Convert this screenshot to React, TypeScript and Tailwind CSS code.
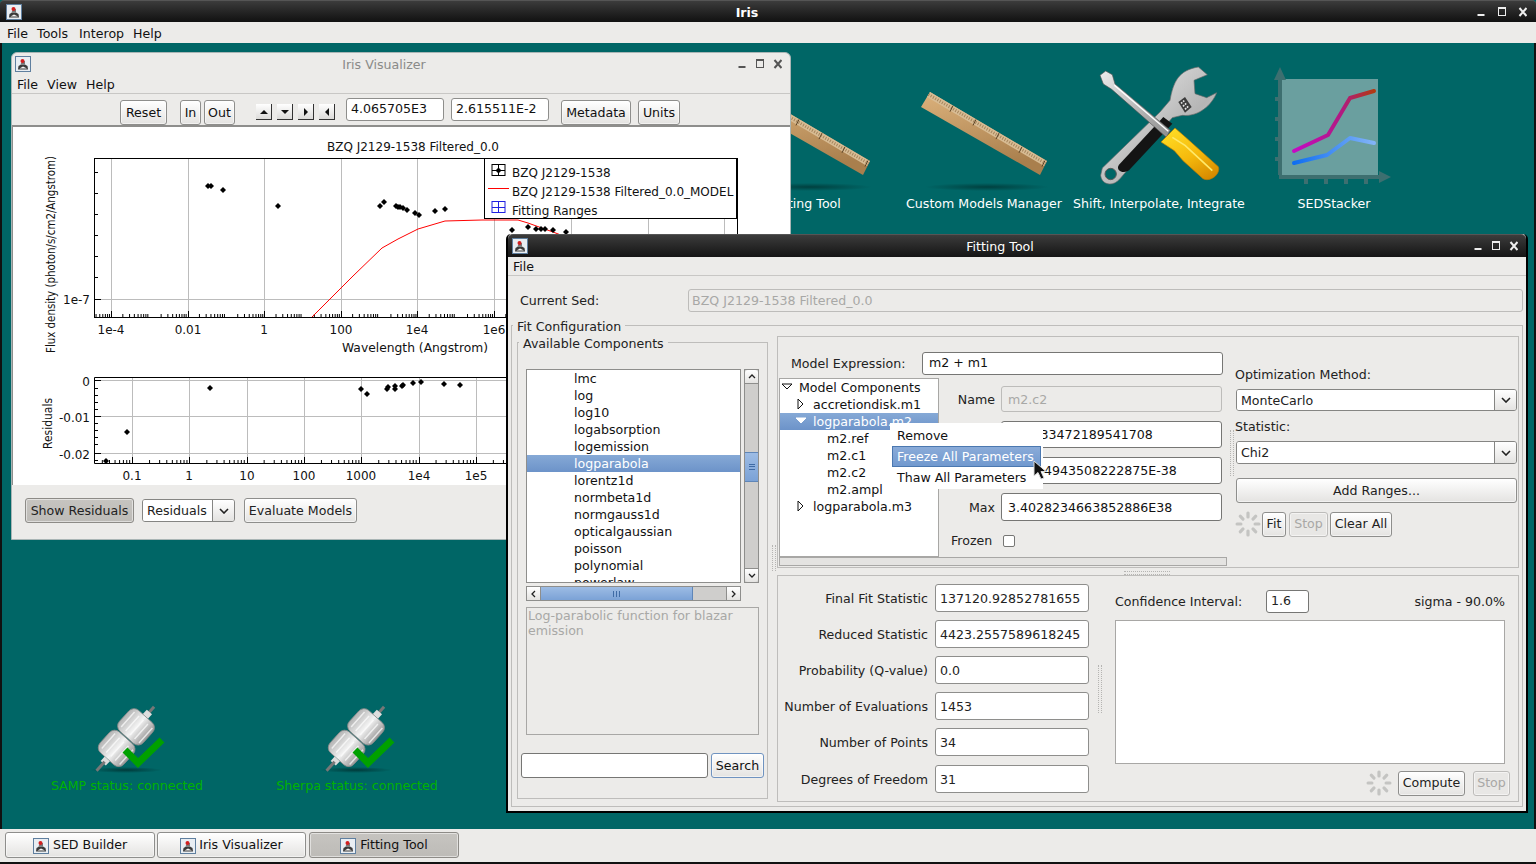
import type { ReactNode } from 'react';

const gridMainX = [111, 188, 264, 341, 417, 494, 571, 648, 724];
const gridResX = [132, 189, 247, 304, 361, 419, 476, 533, 590, 648, 705];
const mainPoints = [
  [208, 186], [211, 186], [223, 190], [278, 206], [380, 206], [384, 202], [396, 206], [398, 207], [400, 207],
  [403, 208], [407, 210], [415, 213], [419, 215], [435, 211], [445, 209], [512, 230], [528, 227], [536, 229],
  [541, 229], [545, 229], [553, 230], [566, 232],
];
const residualPoints = [
  [106, 461], [127, 432], [210, 388], [361, 389], [367, 394], [387, 389], [388, 387], [395, 389], [395, 386],
  [402, 386], [403, 385], [413, 383], [421, 382], [444, 384], [460, 385],
];
const listItems = [
  'lmc', 'log', 'log10', 'logabsorption', 'logemission', 'logparabola', 'lorentz1d', 'normbeta1d', 'normgauss1d',
  'opticalgaussian', 'poisson', 'polynomial', 'powerlaw',
];
const fitStats = [
  ['Final Fit Statistic', '137120.92852781655'],
  ['Reduced Statistic', '4423.2557589618245'],
  ['Probability (Q-value)', '0.0'],
  ['Number of Evaluations', '1453'],
  ['Number of Points', '34'],
  ['Degrees of Freedom', '31'],
];
const logMinors = [0.301, 0.477, 0.602, 0.699, 0.778, 0.845, 0.903, 0.954];

function JavaIcon({ className = '' }: { className?: string }) {
  return (
    <svg width="16" height="16" viewBox="0 0 16 16" className={`shrink-0 ${className}`}>
      <rect x="0.5" y="0.5" width="15" height="15" fill="#e9eef3" stroke="#5f7f9f" />
      <path d="M3 13.5 L3.5 10 L6 8.5 L10 8.5 L12.5 10 L13 13.5 Z" fill="#3a3a3a" />
      <path d="M4.5 12.5 L8 10.5 L12 12.5 Z" fill="#f4f4f4" />
      <path d="M5.5 8.5 L7 5 L10 5 L10 8.5 Z" fill="#777" />
      <circle cx="7.5" cy="5" r="2" fill="#d21f1f" />
    </svg>
  );
}

function WinButtons({ color, gap }: { color: string; gap: number }) {
  return (
    <svg width={2 * gap + 8} height="12" viewBox={`0 0 ${2 * gap + 8} 12`} className="shrink-0">
      <rect x="0.5" y="8" width="7" height="2" fill={color} />
      <rect x={gap + 0.5} y="1.5" width="7" height="8" fill="none" stroke={color} />
      <rect x={gap} y="1" width="8" height="2" fill={color} />
      <path d={`M${2 * gap + 0.5} 2 L${2 * gap + 7.5} 10 M${2 * gap + 7.5} 2 L${2 * gap + 0.5} 10`} stroke={color} strokeWidth="2" />
    </svg>
  );
}

function Btn({ children, className = '', disabled, pressed }: { children: ReactNode; className?: string; disabled?: boolean; pressed?: boolean }) {
  return (
    <div
      className={`flex items-center justify-center rounded-[3px] border pt-[1px] shadow-[inset_0_0_0_1px_rgba(255,255,255,0.5)] ${
        pressed
          ? 'border-[#8d8b87] bg-linear-to-b from-[#c6c4c0] to-[#bdbbb7]'
          : disabled
            ? 'border-[#bdbcba] bg-[#e8e7e5] text-[#a8a8a6]'
            : 'border-[#8e8e8c] bg-linear-to-b from-white to-[#e4e3e1]'
      } ${className}`}
    >
      {children}
    </div>
  );
}

function Field({ value, className = '', disabled }: { value?: string; className?: string; disabled?: boolean }) {
  return (
    <div
      className={`flex items-center overflow-hidden whitespace-nowrap rounded-[3px] border px-[6px] ${
        disabled ? 'border-[#bdbcba] bg-[#ecebe9] text-[#a8a8a6]' : 'border-[#767674] bg-white'
      } ${className}`}
    >
      {value}
    </div>
  );
}

function Combo({ value, className = '' }: { value: string; className?: string }) {
  return (
    <div className={`flex overflow-hidden rounded-[3px] border border-[#858583] ${className}`}>
      <div className="flex flex-1 items-center bg-white px-[4px] pt-[2px]">{value}</div>
      <div className="flex w-[22px] items-center justify-center border-l border-[#858583] bg-linear-to-b from-white to-[#e4e3e1]">
        <svg width="10" height="6" viewBox="0 0 10 6">
          <path d="M1 1 L5 5 L9 1" fill="none" stroke="#222" strokeWidth="1.6" />
        </svg>
      </div>
    </div>
  );
}

function Spinner() {
  const spokes = [0, 45, 90, 135, 180, 225, 270, 315];
  return (
    <svg width="26" height="26" viewBox="-13 -13 26 26" className="shrink-0">
      {spokes.map((a) => (
        <rect key={a} x="-1.6" y="-12.5" width="3.2" height="7" rx="1.5" fill="#c4c4c2" transform={`rotate(${a})`} />
      ))}
    </svg>
  );
}

function ArrowBtn({ d }: { d: string }) {
  return (
    <div className="flex h-[16px] w-[16px] items-center justify-center border-r border-b border-[#333] bg-linear-to-b from-white to-[#dcdbd9]">
      <svg width="8" height="8" viewBox="0 0 8 8">
        <path d={d} fill="#111" />
      </svg>
    </div>
  );
}

function Ruler({ dx }: { dx: number }) {
  return (
    <svg width="140" height="110" viewBox="915 85 140 110" className="absolute top-[85px]" style={{ left: 915 + dx }}>
      <defs>
        <linearGradient id={`wood${dx}`} x1="0" y1="0" x2="0.3" y2="1">
          <stop offset="0" stopColor="#dcb27c" />
          <stop offset="1" stopColor="#a97f4d" />
        </linearGradient>
        <radialGradient id={`shade${dx}`}>
          <stop offset="0" stopColor="#00403f" />
          <stop offset="1" stopColor="#006666" />
        </radialGradient>
      </defs>
      <ellipse cx="987" cy="187" rx="62" ry="4" fill={`url(#shade${dx})`} />
      <polygon points="930,92 921,107 1040,175 1047,161" fill={`url(#wood${dx})`} />
      <polygon points="930,92 927,97 1044,166 1047,161" fill="#d8bc94" />
      <path d="M928.5 94.5 L1045.5 163.5" stroke="#a5855c" strokeWidth="3" strokeDasharray="1 1.6" />
      {[1, 2, 3, 4, 5].map((i) => (
        <path key={i} d={`M${930 + i * 23} ${92 + i * 13.7} l-3 6`} stroke="#5b4326" strokeWidth="1" />
      ))}
    </svg>
  );
}

function Tools() {
  return (
    <svg width="130" height="130" viewBox="0 0 390 390" className="absolute left-[1095px] top-[62px]">
      <defs>
        <linearGradient id="steel" x1="0" y1="0" x2="1" y2="1">
          <stop offset="0" stopColor="#f6f6f6" />
          <stop offset="0.6" stopColor="#b5b5b5" />
          <stop offset="1" stopColor="#e4e4e4" />
        </linearGradient>
        <linearGradient id="head" x1="0" y1="0" x2="1" y2="1">
          <stop offset="0" stopColor="#ededed" />
          <stop offset="1" stopColor="#8c8c8c" />
        </linearGradient>
        <linearGradient id="yellow" x1="0.2" y1="0" x2="0.8" y2="1">
          <stop offset="0" stopColor="#ffdc24" />
          <stop offset="0.55" stopColor="#f5b90c" />
          <stop offset="1" stopColor="#d68a00" />
        </linearGradient>
      </defs>
      <path d="M22 318 L195 150 L225 115 C235 60 250 25 310 15 L337 38 L297 55 L300 95 L335 107 L365 92 C350 130 310 165 262 160 L232 167 L75 350 C55 375 20 370 17 340 Z" fill="url(#steel)" stroke="#6a6a6a" strokeWidth="2" />
      <path d="M72 308 L205 165 L232 185 L102 325 C85 337 60 325 72 308 Z" fill="#141414" />
      <circle cx="47" cy="336" r="17" fill="#006666" stroke="#5a5a5a" strokeWidth="3" />
      <path d="M250 120 L270 105 L290 135 L270 152 Z" fill="#3c3c3c" />
      <path d="M258 124 L270 114 M264 133 L276 122 M270 142 L282 131" stroke="#e8e8e8" strokeWidth="5" strokeDasharray="5 3" />
      <path d="M15 40 L32 27 L52 38 L60 66 L226 205 L214 226 L50 82 L25 66 Z" fill="url(#head)" stroke="#555" strokeWidth="2" />
      <path d="M58 70 L220 208" stroke="#fff" strokeWidth="4" />
      <path d="M198 240 L240 198 L272 226 L370 314 C378 335 346 362 324 350 L264 296 L238 266 Z" fill="url(#yellow)" stroke="#b97a00" strokeWidth="2" />
      <path d="M232 226 L270 250 L352 326" fill="none" stroke="#ffe96a" strokeWidth="5" />
    </svg>
  );
}

function Stacker() {
  return (
    <svg width="122" height="124" viewBox="1272 66 122 124" className="absolute left-[1272px] top-[66px]">
      <defs>
        <linearGradient id="upper" x1="0" y1="0" x2="1" y2="0" gradientUnits="objectBoundingBox">
          <stop offset="0" stopColor="#c40bc4" />
          <stop offset="0.6" stopColor="#b01a80" />
          <stop offset="1" stopColor="#b23a12" />
        </linearGradient>
        <linearGradient id="lower" x1="0" y1="0" x2="1" y2="0">
          <stop offset="0" stopColor="#0f6ef0" />
          <stop offset="1" stopColor="#82b4f8" />
        </linearGradient>
      </defs>
      <rect x="1280" y="79" width="98" height="96" fill="#6a9f9f" />
      <path d="M1280 175 V74 M1279 177 H1384" stroke="#3d6f70" strokeWidth="4" fill="none" />
      <polygon points="1280,67 1274,80 1286,80" fill="#3d6f70" />
      <polygon points="1391,177 1379,171 1379,183" fill="#3d6f70" />
      {[97, 117, 137, 157].map((y) => (
        <rect key={y} x="1275" y={y} width="7" height="4" fill="#3d6f70" />
      ))}
      {[1304, 1324, 1344, 1364].map((x) => (
        <rect key={x} x={x} y="177" width="4" height="7" fill="#3d6f70" />
      ))}
      <polyline points="1294,151 1328,135 1350,98 1374,91" fill="none" stroke="url(#upper)" strokeWidth="4" strokeLinecap="round" strokeLinejoin="round" />
      <polyline points="1294,163 1327,155 1350,138 1374,143" fill="none" stroke="url(#lower)" strokeWidth="4" strokeLinecap="round" strokeLinejoin="round" />
    </svg>
  );
}

function PlugStatus({ left, label }: { left: number; label: string }) {
  const id = `plug${left}`;
  const ridges = [24, 30, 36, 42, 48];
  return (
    <div className="absolute top-[700px] flex w-[200px] flex-col items-center text-[#00b300]" style={{ left }}>
      <svg width="72" height="76" viewBox="0 0 72 76" className="overflow-visible">
        <defs>
          <linearGradient id={id} x1="0" y1="0" x2="1" y2="0">
            <stop offset="0" stopColor="#b4b4b4" />
            <stop offset="0.5" stopColor="#f2f2f2" />
            <stop offset="1" stopColor="#989898" />
          </linearGradient>
          <radialGradient id={`${id}s`}>
            <stop offset="0" stopColor="#003a3a" />
            <stop offset="1" stopColor="#006666" />
          </radialGradient>
        </defs>
        <ellipse cx="35" cy="70" rx="36" ry="3" fill={`url(#${id}s)`} />
        <g transform="rotate(42 35 38)">
          <rect x="33.5" y="-4" width="3" height="14" fill="#777" />
          <rect x="31.5" y="3" width="7" height="7" fill="#ddd" />
          <rect x="19" y="9" width="32" height="28" rx="7" fill={`url(#${id})`} stroke="#8a8a8a" strokeWidth="0.8" />
          <rect x="19" y="38" width="32" height="28" rx="7" fill={`url(#${id})`} stroke="#8a8a8a" strokeWidth="0.8" />
          {ridges.map((x) => (
            <path key={x} d={`M${x} 13 V33 M${x} 42 V62`} stroke="#ffffff" strokeWidth="1.5" opacity="0.7" />
          ))}
          <rect x="31.5" y="66" width="7" height="6" fill="#ddd" />
          <rect x="33.5" y="70" width="3" height="12" fill="#777" />
        </g>
        <polyline points="34,50 47,63 71,40" fill="none" stroke="#00a000" strokeWidth="7" />
      </svg>
      <span className="mt-[2px] leading-[16px]">{label}</span>
    </div>
  );
}

function PlotArea() {
  const minorX: number[] = [];
  for (let i = 0; i < 17; i++) logMinors.forEach((m) => minorX.push(73 + i * 38.3 + m * 38.3));
  const resMinorX: number[] = [];
  for (let i = 0; i < 12; i++) logMinors.forEach((m) => resMinorX.push(75 + i * 57.3 + m * 57.3));
  const point = (x: number, y: number) => `${x},${y - 3} ${x + 3},${y} ${x},${y + 3} ${x - 3},${y}`;

  return (
    <svg width="777" height="358" viewBox="13 127 777 358" className="block" fontFamily="DejaVu Sans" fontSize="12" fill="#111">
      <text x="413" y="151" textAnchor="middle">BZQ J2129-1538 Filtered_0.0</text>
      {gridMainX.map((x) => <path key={x} d={`M${x + 0.5} 159 V317`} stroke="#bcbcbc" />)}
      <path d="M95 299.5 H737" stroke="#bcbcbc" />
      <rect x="94.5" y="158.5" width="643" height="159" fill="none" stroke="#000" />
      {minorX.filter((x) => x > 95 && x < 737).map((x) => <path key={x} d={`M${x} 317 v-3`} stroke="#000" />)}
      {gridMainX.map((x) => <path key={x} d={`M${x + 0.5} 317 v-6`} stroke="#000" />)}
      {[172, 193, 214, 235, 256, 277].map((y) => <path key={y} d={`M95 ${y + 0.5} h3`} stroke="#000" />)}
      <path d="M95 299.5 h6" stroke="#000" />
      <polyline points="312,317 337,292 353,276 382,248 398,239 418,229 445,221 482,220 518,220 528,223 553,232 600,250" fill="none" stroke="#f00" />
      {mainPoints.map(([x, y]) => <polygon key={`${x}-${y}`} points={point(x, y)} fill="#000" />)}
      {[['1e-4', 111], ['0.01', 188], ['1', 264], ['100', 341], ['1e4', 417], ['1e6', 494]].map(([t, x]) => (
        <text key={t} x={x} y="334" textAnchor="middle">{t}</text>
      ))}
      <text x="90" y="304" textAnchor="end">1e-7</text>
      <text x="342" y="352" textLength="146" lengthAdjust="spacingAndGlyphs">Wavelength (Angstrom)</text>
      <text transform="translate(55 353) rotate(-90)" textLength="197" lengthAdjust="spacingAndGlyphs">Flux density (photon/s/cm2/Angstrom)</text>

      <rect x="484.5" y="158.5" width="252" height="60" fill="#fff" stroke="#000" />
      <path d="M498.5 164 V176 M492 164.5 H505 M492 175.5 H505 M492 170.5 H505 M492 164 V176 M505 164 V176" stroke="#000" fill="none" />
      <polygon points={point(498.5, 170.5)} fill="#000" />
      <path d="M488 188.5 H509" stroke="#f00" />
      <path d="M498.5 201 V213 M492 201.5 H505 M492 212.5 H505 M492 207.5 H505 M492 201 V213 M505 201 V213" stroke="#2020e0" fill="none" />
      <text x="512" y="177">BZQ J2129-1538</text>
      <text x="512" y="196">BZQ J2129-1538 Filtered_0.0_MODEL</text>
      <text x="512" y="215">Fitting Ranges</text>

      {gridResX.map((x) => <path key={x} d={`M${x + 0.5} 378 V463`} stroke="#bcbcbc" />)}
      {[380, 416, 453].map((y) => <path key={y} d={`M95 ${y + 0.5} H737`} stroke="#bcbcbc" />)}
      <path d="M737.5 377.5 H94.5 V463.5 H737.5" fill="none" stroke="#000" />
      {resMinorX.filter((x) => x > 95 && x < 737).map((x) => <path key={x} d={`M${x} 463 v-3`} stroke="#000" />)}
      {gridResX.map((x) => <path key={x} d={`M${x + 0.5} 463 v-6`} stroke="#000" />)}
      {[388, 395, 402, 409, 423, 430, 437, 444, 460].map((y) => <path key={y} d={`M95 ${y + 0.5} h3`} stroke="#000" />)}
      {[380, 416, 453].map((y) => <path key={y} d={`M95 ${y + 0.5} h6`} stroke="#000" />)}
      {residualPoints.map(([x, y]) => <polygon key={`${x}-${y}`} points={point(x, y)} fill="#000" />)}
      {[['0.1', 132], ['1', 189], ['10', 247], ['100', 304], ['1000', 361], ['1e4', 419], ['1e5', 476]].map(([t, x]) => (
        <text key={t} x={x} y="480" textAnchor="middle">{t}</text>
      ))}
      <text x="90" y="386" textAnchor="end">0</text>
      <text x="90" y="422" textAnchor="end">-0.01</text>
      <text x="90" y="459" textAnchor="end">-0.02</text>
      <text transform="translate(52 449) rotate(-90)" textLength="51" lengthAdjust="spacingAndGlyphs">Residuals</text>
    </svg>
  );
}

function VisualizerWindow() {
  return (
    <div className="absolute left-[11px] top-[52px] flex h-[488px] w-[780px] flex-col overflow-hidden rounded-t-[6px] border border-[#a9b5b5] bg-[#ecebe9]">
      <div className="relative flex h-[22px] shrink-0 items-center justify-between pl-[3px] pr-[8px]">
        <JavaIcon />
        <span className="absolute left-0 top-[3px] w-full pr-[34px] text-center text-[#8a8a88]">Iris Visualizer</span>
        <WinButtons color="#555" gap={18} />
      </div>
      <div className="flex h-[19px] shrink-0 items-center gap-[9px] border-b border-[#c8c7c5] pl-[5px] pt-[2px]">
        <span>File</span>
        <span>View</span>
        <span>Help</span>
      </div>
      <div className="flex h-[33px] shrink-0 items-start border-b-2 border-[#8e8e8c] pl-[108px] pt-[6px]">
        <Btn className="h-[25px] w-[47px]">Reset</Btn>
        <Btn className="ml-[13px] h-[25px] w-[21px]">In</Btn>
        <Btn className="ml-[3px] h-[25px] w-[31px]">Out</Btn>
        <div className="ml-[21px] mt-[4px] flex gap-[5px]">
          <ArrowBtn d="M0 6 L4 2 L8 6 Z" />
          <ArrowBtn d="M0 2 L8 2 L4 6 Z" />
          <ArrowBtn d="M2 0 L6 4 L2 8 Z" />
          <ArrowBtn d="M6 0 L2 4 L6 8 Z" />
        </div>
        <Field value="4.065705E3" className="-mt-[2px] ml-[11px] h-[23px] w-[98px] !px-[4px] !border-[#8e8e8c]" />
        <Field value="2.615511E-2" className="-mt-[2px] ml-[7px] h-[23px] w-[98px] !px-[4px] !border-[#8e8e8c]" />
        <Btn className="ml-[12px] h-[25px] w-[70px]">Metadata</Btn>
        <Btn className="ml-[7px] h-[25px] w-[42px]">Units</Btn>
      </div>
      <div className="h-[358px] shrink-0 border-l border-[#8e8e8c] bg-white">
        <PlotArea />
      </div>
      <div className="flex flex-1 items-start gap-[8px] pl-[13px] pt-[13px] text-[#222]">
        <Btn pressed className="h-[25px] w-[109px]">Show Residuals</Btn>
        <Combo value="Residuals" className="mt-[1px] h-[23px] w-[93px]" />
        <Btn className="ml-[1px] h-[25px] w-[113px]">Evaluate Models</Btn>
      </div>
    </div>
  );
}

function GroupBox({ title, className = '', children }: { title: string; className?: string; children: ReactNode }) {
  return (
    <div className={`relative border border-[#bebdbb] ${className}`}>
      <span className="absolute -top-[6px] left-[1px] bg-[#ecebe9] px-[4px] leading-[14px] text-[#222]">{title}</span>
      {children}
    </div>
  );
}

function ComponentList() {
  return (
    <GroupBox title="Available Components" className="mt-[6px] h-[457px] w-[251px] shrink-0">
      <div className="ml-[8px] mt-[26px] flex gap-[3px]">
        <div className="h-[214px] w-[215px] overflow-hidden border border-[#8e8e8c] bg-white">
          {listItems.map((item) => (
            <div
              key={item}
              className={`h-[17px] pl-[47px] leading-[17px] ${item === 'logparabola' ? 'bg-linear-to-b from-[#86a9d6] to-[#6c93c9] text-white' : ''}`}
            >
              {item}
            </div>
          ))}
        </div>
        <div className="flex h-[214px] w-[15px] flex-col border border-[#8e8e8c] bg-[#cfcecc]">
          <div className="flex h-[14px] items-center justify-center rounded-t-[3px] border-b border-[#8e8e8c] bg-linear-to-b from-white to-[#e4e3e1]">
            <svg width="8" height="5" viewBox="0 0 8 5"><path d="M1 4 L4 1 L7 4" fill="none" stroke="#222" strokeWidth="1.3" /></svg>
          </div>
          <div className="mt-[68px] flex h-[30px] items-center justify-center border-y border-[#5f86b8] bg-linear-to-b from-[#9dbce4] to-[#7ba2d6]">
            <div className="h-[6px] w-[6px] border-y border-[#3f6ba5] after:block after:h-[1px] after:translate-y-[1px] after:bg-[#3f6ba5]" />
          </div>
          <div className="mt-auto flex h-[14px] items-center justify-center rounded-b-[3px] border-t border-[#8e8e8c] bg-linear-to-b from-white to-[#e4e3e1]">
            <svg width="8" height="5" viewBox="0 0 8 5"><path d="M1 1 L4 4 L7 1" fill="none" stroke="#222" strokeWidth="1.3" /></svg>
          </div>
        </div>
      </div>
      <div className="ml-[8px] mt-[3px] flex h-[15px] w-[215px] border border-[#8e8e8c] bg-[#cfcecc]">
        <div className="flex w-[14px] items-center justify-center border-r border-[#8e8e8c] bg-linear-to-b from-white to-[#e4e3e1]">
          <svg width="5" height="8" viewBox="0 0 5 8"><path d="M4 1 L1 4 L4 7" fill="none" stroke="#222" strokeWidth="1.3" /></svg>
        </div>
        <div className="flex w-[152px] items-center justify-center gap-[1px] border-r border-[#5f86b8] bg-linear-to-b from-[#9dbce4] to-[#7ba2d6]">
          <i className="h-[6px] w-[1px] bg-[#3f6ba5]" />
          <i className="ml-[1px] h-[6px] w-[1px] bg-[#3f6ba5]" />
          <i className="ml-[1px] h-[6px] w-[1px] bg-[#3f6ba5]" />
        </div>
        <div className="ml-auto flex w-[14px] items-center justify-center border-l border-[#8e8e8c] bg-linear-to-b from-white to-[#e4e3e1]">
          <svg width="5" height="8" viewBox="0 0 5 8"><path d="M1 1 L4 4 L1 7" fill="none" stroke="#222" strokeWidth="1.3" /></svg>
        </div>
      </div>
      <div className="ml-[8px] mt-[6px] h-[128px] w-[233px] border border-[#a8a7a5] px-[1px] leading-[15px] text-[#a8a8a6]">
        Log-parabolic function for blazar emission
      </div>
      <div className="ml-[3px] mt-[18px] flex h-[25px] gap-[3px]">
        <Field className="h-[25px] w-[187px]" />
        <Btn className="h-[25px] w-[53px] !border-[#6f93c0]">Search</Btn>
      </div>
    </GroupBox>
  );
}

function TreeRow({ indent, label, arrow, selected }: { indent: number; label: string; arrow?: 'open' | 'closed'; selected?: boolean }) {
  return (
    <div className={`relative h-[17px] leading-[17px] ${selected ? 'bg-linear-to-b from-[#86a9d6] to-[#6c93c9] text-white' : ''}`} style={{ paddingLeft: indent }}>
      {arrow && (
        <svg width="12" height="12" viewBox="0 0 12 12" className="absolute top-[2px]" style={{ left: indent - 18 }}>
          {arrow === 'open' ? (
            <path d="M1 3 H11 L6 8 Z" fill={selected ? '#fff' : 'none'} stroke={selected ? '#fff' : '#111'} />
          ) : (
            <path d="M3 1 V11 L8 6 Z" fill="none" stroke="#111" />
          )}
        </svg>
      )}
      {label}
    </div>
  );
}

function ModelPanel() {
  return (
    <div className="flex h-[232px] border border-[#bebdbb]">
      <div className="ml-[1px] flex w-[448px] shrink-0 flex-col">
        <div className="mt-[15px] flex h-[23px] items-center">
          <span className="ml-[12px] w-[131px] pt-[1px] text-[#222]">Model Expression:</span>
          <Field value="m2 + m1" className="h-[23px] w-[301px]" />
        </div>
        <div className="mt-[3px] flex h-[179px]">
          <div className="w-[160px] shrink-0 overflow-hidden border border-[#a8a7a5] bg-white">
            <TreeRow indent={19} label="Model Components" arrow="open" />
            <TreeRow indent={33} label="accretiondisk.m1" arrow="closed" />
            <TreeRow indent={33} label="logparabola.m2" arrow="open" selected />
            <TreeRow indent={47} label="m2.ref" />
            <TreeRow indent={47} label="m2.c1" />
            <TreeRow indent={47} label="m2.c2" />
            <TreeRow indent={47} label="m2.ampl" />
            <TreeRow indent={33} label="logparabola.m3" arrow="closed" />
          </div>
          <div className="flex flex-1 flex-col gap-[9px] pt-[8px]">
            {[
              ['Name', 'm2.c2', 'h-[26px]', true],
              ['Val', '-1.2833472189541708', 'h-[27px]', false],
              ['Min', '1.1754943508222875E-38', 'h-[27px]', false],
              ['Max', '3.4028234663852886E38', 'h-[28px]', false],
            ].map(([label, value, height, disabled]) => (
              <div key={label as string} className="flex items-center">
                <span className="w-[62px] pr-[6px] pt-[2px] text-right text-[#222]">{label}</span>
                <Field value={value as string} disabled={disabled as boolean} className={`w-[221px] pt-[2px] ${height as string}`} />
              </div>
            ))}
            <div className="mt-[1px] flex items-center pl-[12px] text-[#222]">
              <span className="w-[52px] pt-[1px]">Frozen</span>
              <div className="h-[12px] w-[12px] rounded-[2px] border border-[#767674] bg-white" />
            </div>
          </div>
        </div>
        <div className="h-[9px] border border-[#a8a7a5] bg-[#e4e3e1]" />
      </div>
      <div className="ml-[8px] flex w-[282px] shrink-0 flex-col text-[#222]">
        <span className="mt-[30px] h-[16px] leading-[16px]">Optimization Method:</span>
        <Combo value="MonteCarlo" className="ml-[1px] mt-[6px] h-[22px] w-[281px]" />
        <span className="mt-[8px] h-[16px] leading-[16px]">Statistic:</span>
        <Combo value="Chi2" className="ml-[1px] mt-[6px] h-[23px] w-[281px]" />
        <Btn className="ml-[1px] mt-[14px] h-[25px] w-[281px]">Add Ranges...</Btn>
        <div className="mt-[8px] flex items-center">
          <Spinner />
          <Btn className="ml-[1px] h-[25px] w-[24px]">Fit</Btn>
          <Btn disabled className="ml-[3px] h-[25px] w-[39px]">Stop</Btn>
          <Btn className="ml-[2px] h-[25px] w-[62px]">Clear All</Btn>
        </div>
      </div>
    </div>
  );
}

function ResultsPanel() {
  return (
    <div className="mt-[7px] flex h-[227px] border border-[#bebdbb]">
      <div className="flex w-[311px] shrink-0 flex-col gap-[8px] pt-[8px] text-[#222]">
        {fitStats.map(([label, value]) => (
          <div key={label} className="flex h-[28px] items-center justify-end last:mt-[1px]">
            <span className="mr-[7px] pt-[2px]">{label}</span>
            <Field value={value} className="h-[28px] w-[154px] !px-[4px] pt-[2px] !border-[#8e8e8c]" />
          </div>
        ))}
      </div>
      <div className="ml-[26px] flex w-[390px] shrink-0 flex-col text-[#222]">
        <div className="mt-[14px] flex h-[23px] items-center">
          <span className="w-[151px] pt-[2px]">Confidence Interval:</span>
          <Field value="1.6" className="h-[23px] w-[43px] !px-[4px]" />
          <span className="ml-auto pt-[2px]">sigma - 90.0%</span>
        </div>
        <div className="mt-[7px] h-[144px] border border-[#a8a7a5] bg-white" />
        <div className="mr-[-5px] mt-[6px] flex items-center justify-end">
          <Spinner />
          <Btn className="ml-[6px] h-[25px] w-[67px]">Compute</Btn>
          <Btn disabled className="ml-[8px] h-[25px] w-[37px]">Stop</Btn>
        </div>
      </div>
    </div>
  );
}

function FittingWindow() {
  return (
    <div className="absolute left-[506px] top-[234px] flex h-[579px] w-[1022px] flex-col rounded-t-[5px] border-2 border-t-0 border-black bg-[#ecebe9]">
      <div className="relative flex h-[23px] shrink-0 items-center justify-between rounded-t-[5px] border-t border-[#555] bg-linear-to-b from-[#3c3c3c] to-[#151515] pl-[4px] pr-[8px] text-white">
        <JavaIcon />
        <span className="absolute left-0 top-[3px] w-full pr-[34px] text-center">Fitting Tool</span>
        <WinButtons color="#eee" gap={18} />
      </div>
      <div className="flex h-[19px] shrink-0 items-center border-b border-[#c8c7c5] pl-[5px] pt-[2px]">File</div>
      <div className="mt-[13px] flex h-[23px] shrink-0 items-center pl-[12px]">
        <span className="w-[168px] pt-[2px] text-[#222]">Current Sed:</span>
        <Field value="BZQ J2129-1538 Filtered_0.0" disabled className="h-[23px] w-[835px] !px-[3px] pt-[2px]" />
      </div>
      <GroupBox title="Fit Configuration" className="ml-[3px] mt-[13px] h-[482px] w-[1012px]">
        <div className="flex items-start pl-[5px] pt-[10px]">
          <ComponentList />
          <div className="ml-[9px] w-[742px] shrink-0">
            <ModelPanel />
            <ResultsPanel />
          </div>
        </div>
      </GroupBox>
    </div>
  );
}

function ContextMenu() {
  return (
    <div className="absolute left-[890px] top-[423px] flex h-[66px] w-[153px] flex-col bg-white pl-[2px]">
      <div className="flex h-[23px] items-center pl-[5px] pt-[3px]">Remove</div>
      <div className="flex h-[21px] w-[149px] items-center border border-[#4b78b0] bg-linear-to-b from-[#8aabd8] to-[#7199cf] pl-[4px] pt-[2px] text-white">
        Freeze All Parameters
      </div>
      <div className="flex h-[22px] items-center pl-[5px]">Thaw All Parameters</div>
    </div>
  );
}

function Grip({ className }: { className: string }) {
  return <div className={`absolute border-[#b5b4b2] ${className}`} />;
}

export default function App() {
  return (
    <div className="relative flex h-[864px] w-[1536px] flex-col overflow-hidden bg-[#006666] font-['DejaVu_Sans',sans-serif] text-[12.6px] text-[#111]">
      <div className="relative flex h-[22px] shrink-0 items-center justify-between rounded-t-[4px] border-t border-[#555] bg-linear-to-b from-[#3c3c3c] to-[#111] pl-[6px] pr-[9px] text-white">
        <JavaIcon />
        <span className="absolute left-0 top-[3px] w-full pr-[42px] text-center font-bold">Iris</span>
        <WinButtons color="#eee" gap={21} />
      </div>
      <div className="flex h-[21px] shrink-0 items-center gap-[9px] bg-[#ecebe9] pl-[7px] pt-[3px]">
        <span>File</span>
        <span>Tools</span>
        <span className="ml-[2px]">Interop</span>
        <span>Help</span>
      </div>
      <div className="flex-1 border-x-2 border-[#111]" />
      <div className="flex h-[35px] shrink-0 items-start gap-[2px] border-b-2 border-[#111] bg-[#ecebe9] pl-[5px] pt-[3px]">
        <Btn className="h-[26px] w-[150px] gap-[4px]"><JavaIcon />SED Builder</Btn>
        <Btn className="h-[26px] w-[149px] gap-[3px]"><JavaIcon />Iris Visualizer</Btn>
        <Btn pressed className="ml-[1px] h-[26px] w-[150px] gap-[4px]"><JavaIcon />Fitting Tool</Btn>
      </div>

      <Ruler dx={-177} />
      <span className="absolute left-[747px] top-[195px] w-[120px] text-center text-white">Fitting Tool</span>
      <Ruler dx={0} />
      <span className="absolute left-[884px] top-[195px] w-[200px] text-center text-white">Custom Models Manager</span>
      <Tools />
      <span className="absolute left-[1059px] top-[195px] w-[200px] text-center text-white">Shift, Interpolate, Integrate</span>
      <Stacker />
      <span className="absolute left-[1284px] top-[195px] w-[100px] text-center text-white">SEDStacker</span>
      <PlugStatus left={27} label="SAMP status: connected" />
      <PlugStatus left={257} label="Sherpa status: connected" />

      <VisualizerWindow />
      <FittingWindow />
      <ContextMenu />
      <Grip className="left-[772px] top-[545px] h-[26px] w-[4px] border-x border-dotted" />
      <Grip className="left-[1124px] top-[571px] h-[4px] w-[46px] border-y border-dotted" />
      <Grip className="left-[1098px] top-[665px] h-[48px] w-[4px] border-x border-dotted" />
      <Grip className="left-[1230px] top-[430px] h-[46px] w-[4px] border-x border-dotted" />

      <svg width="16" height="22" viewBox="0 0 16 22" className="absolute left-[1033px] top-[460px]">
        <path d="M1 1 V16 L5 12.5 L8 19 L11 18 L8 11.5 L13 11.5 Z" fill="#111" stroke="#ddd" strokeWidth="1" />
      </svg>
    </div>
  );
}
